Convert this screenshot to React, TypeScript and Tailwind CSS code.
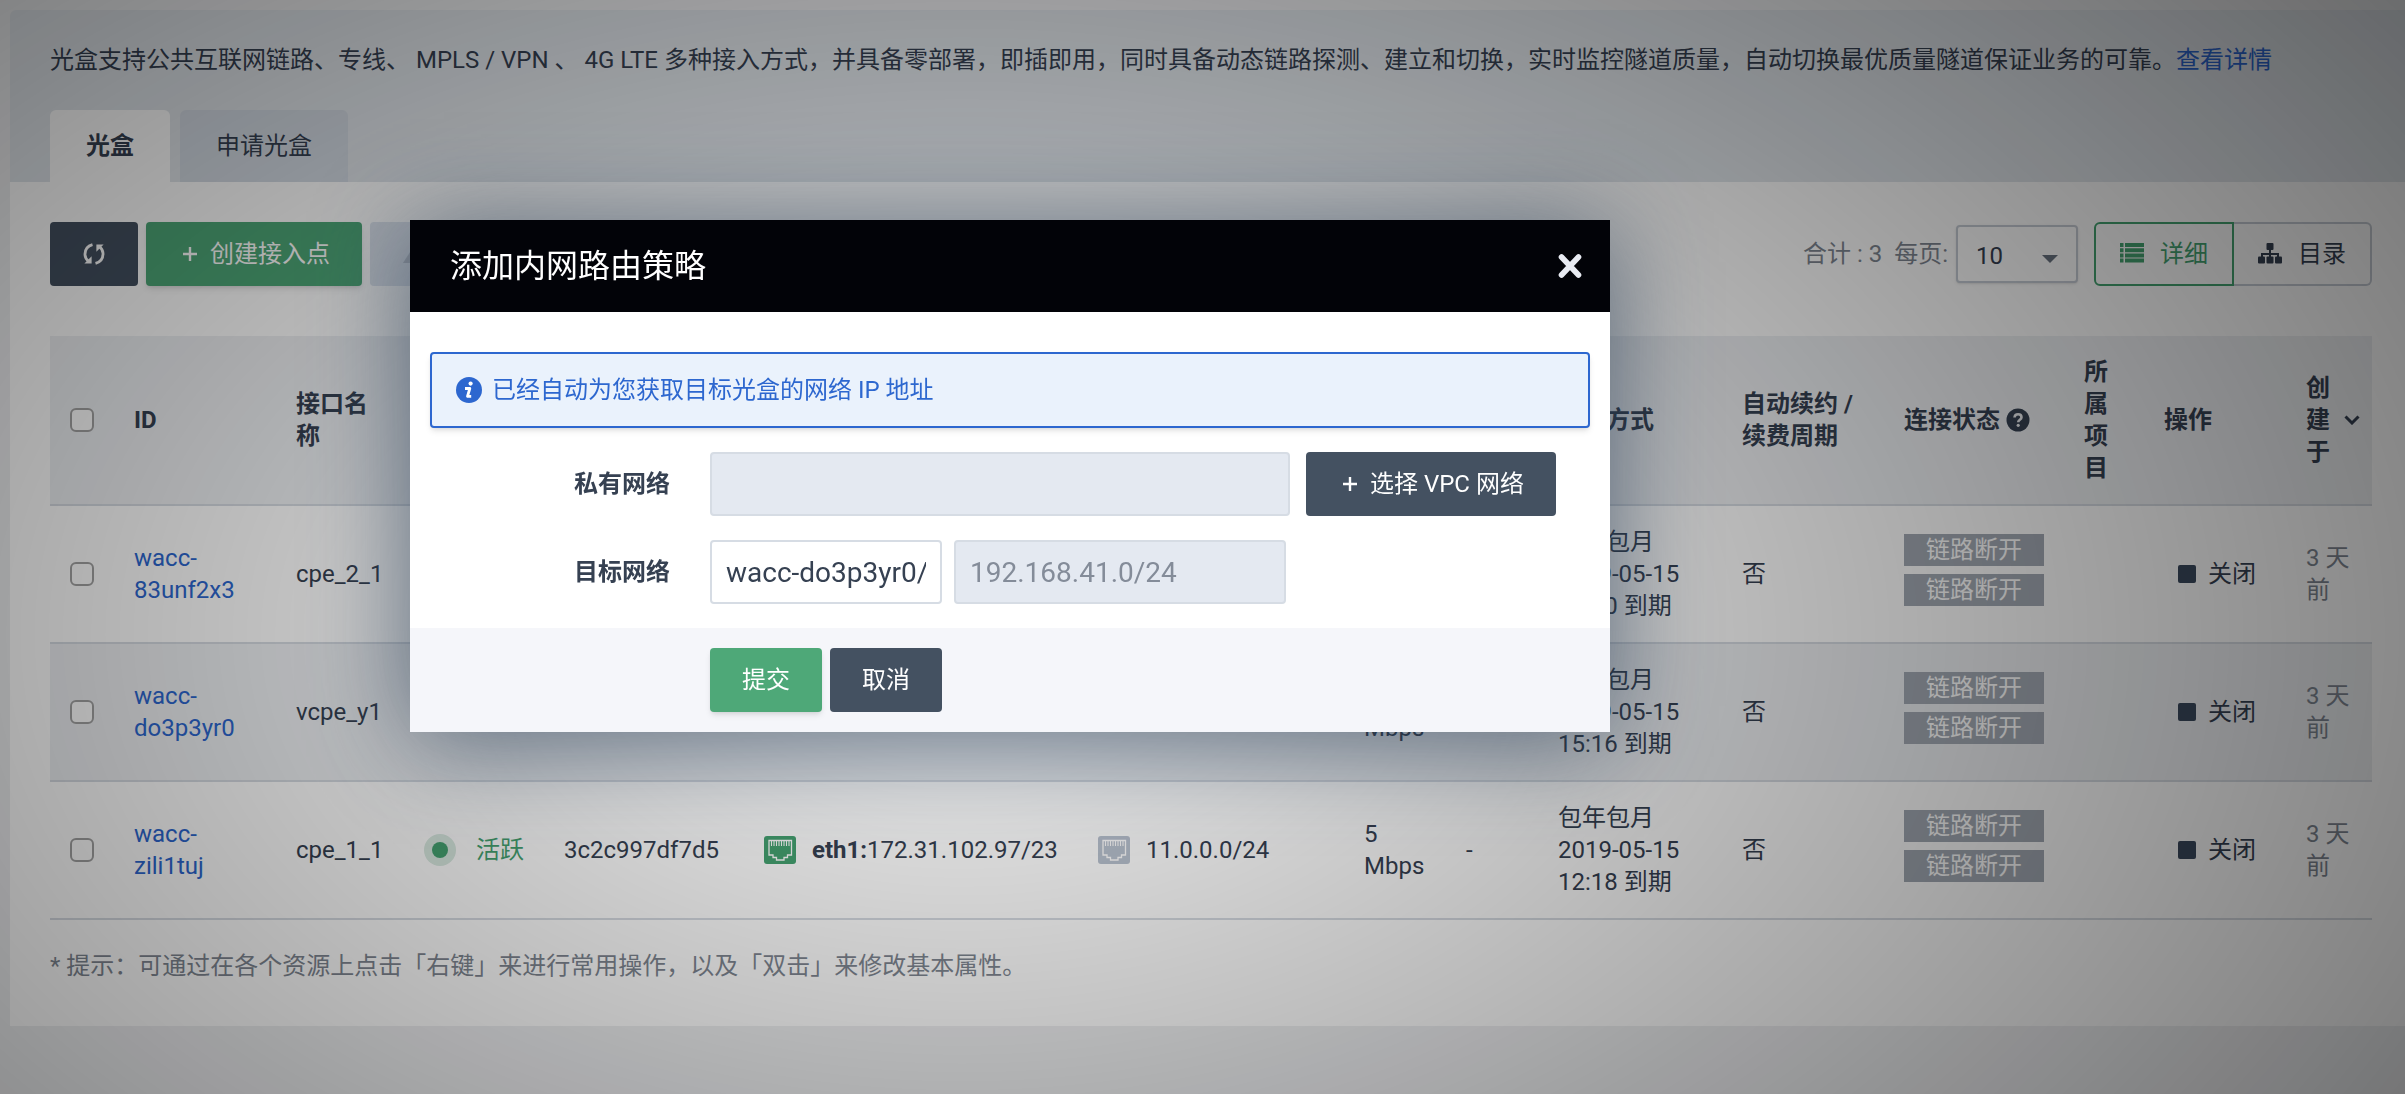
import { useState } from 'react';
import type { ReactNode } from 'react';

interface AccessPoint {
  id: string[];
  name: string;
  mac: string;
  wan: string;
  lan: string;
  expires: string;
}

const accessPoints: AccessPoint[] = [
  { id: ['wacc-', '83unf2x3'], name: 'cpe_2_1', mac: '3c2c997df7a1', wan: '172.31.102.95/23', lan: '12.0.0.0/24', expires: '15:20' },
  { id: ['wacc-', 'do3p3yr0'], name: 'vcpe_y1', mac: '3c2c997df7b3', wan: '172.31.102.96/23', lan: '192.168.41.0/24', expires: '15:16' },
  { id: ['wacc-', 'zili1tuj'], name: 'cpe_1_1', mac: '3c2c997df7d5', wan: '172.31.102.97/23', lan: '11.0.0.0/24', expires: '12:18' }
];

function PlusIcon() {
  return (
    <svg className="w-6 h-6" viewBox="0 0 24 24" fill="none" stroke="currentColor" strokeWidth="2.4" aria-hidden="true">
      <path d="M12 5v14M5 12h14" />
    </svg>
  );
}

function RefreshIcon() {
  return (
    <svg className="w-6 h-6" viewBox="0 0 24 24" fill="none" stroke="currentColor" strokeWidth="2.8" aria-hidden="true">
      <path d="M10.500 2.600C5.500 4 2.800 8 3 12.800c.2 2.600 1.500 5 3.700 6.600" />
      <path d="M13.500 21.400c5-1.400 7.700-5.400 7.500-10.200-.2-2.600-1.500-5-3.700-6.600" />
      <path d="M2.400 21.400h7.200v-7.200z" fill="currentColor" stroke="none" />
      <path d="M21.600 2.600h-7.200v7.200z" fill="currentColor" stroke="none" />
    </svg>
  );
}

function ListIcon() {
  return (
    <svg className="w-6 h-6" viewBox="0 0 24 24" fill="currentColor" aria-hidden="true">
      <path d="M0 1h3.500v4H0zM5 1h19v4H5zM0 6.200h3.500v4H0zM5 6.200h19v4H5zM0 11.400h3.500v4H0zM5 11.400h19v4H5zM0 16.600h3.500v4H0zM5 16.600h19v4H5z" />
    </svg>
  );
}

function TreeIcon() {
  return (
    <svg className="w-6 h-6" viewBox="0 0 24 24" fill="currentColor" aria-hidden="true">
      <rect x="8.500" y="1" width="7" height="7" rx="1" />
      <path d="M11 8h2v3h8v4h-2v-2h-6v2h-2v-2H5v2H3v-4h8z" />
      <rect x="0" y="14.500" width="7" height="7" rx="1" />
      <rect x="8.500" y="14.500" width="7" height="7" rx="1" />
      <rect x="17" y="14.500" width="7" height="7" rx="1" />
    </svg>
  );
}

function PortIcon({ active }: { active?: boolean }) {
  return (
    <svg className="w-8 h-7 shrink-0" viewBox="0 0 32 28" fill="none" aria-hidden="true">
      <rect width="32" height="28" rx="3" fill={active ? '#45a371' : '#b9c2cf'} />
      <path
        d="M5 4.500h22.500v14.500h-4v2.500h-3.500v2.500h-7.500v-2.500H9v-2.500H5z"
        stroke="#fff"
        strokeWidth="1.300"
      />
      <path d="M7.500 5v5M10 5v5M12.500 5v5M15 5v5M17.500 5v5M20 5v5M22.500 5v5M25 5v5" stroke="#fff" strokeWidth="1.100" />
    </svg>
  );
}

function HelpIcon() {
  return (
    <svg className="w-6 h-6" viewBox="0 0 24 24" fill="none" aria-hidden="true">
      <circle cx="12" cy="12" r="11.500" fill="currentColor" />
      <path d="M8.500 9.500c.2-2.200 1.600-3.300 3.600-3.300s3.400 1.200 3.400 3c0 2.600-3.300 2.500-3.300 5" stroke="#eef0f3" strokeWidth="2.600" />
      <circle cx="12.200" cy="17.300" r="1.600" fill="#eef0f3" />
    </svg>
  );
}

function InfoIcon() {
  return (
    <svg className="w-[26px] h-[26px] shrink-0" viewBox="0 0 26 26" fill="none" aria-hidden="true">
      <circle cx="13" cy="13" r="13" fill="#2d67cf" />
      <circle cx="14.600" cy="6.600" r="2.100" fill="#fff" />
      <path d="M9 11.500h4.800l-2.300 7.800h3.700" stroke="#fff" strokeWidth="2.800" strokeLinejoin="round" />
    </svg>
  );
}

function CloseIcon() {
  return (
    <svg className="w-6 h-6" viewBox="0 0 24 24" fill="none" stroke="currentColor" strokeWidth="5.600" strokeLinecap="round" aria-hidden="true">
      <path d="M3.500 3l17 18M20.500 3l-17 18" />
    </svg>
  );
}

const checkboxClass = 'block w-6 h-6 appearance-none rounded-md border-2 border-[#a3a3a3] bg-white';

function Cell({ children }: { children?: ReactNode }) {
  return <td className="px-5 py-5 align-middle">{children}</td>;
}

function HeadCell({ children }: { children?: ReactNode }) {
  return (
    <th scope="col" className="px-5 py-5 align-middle text-left font-bold">
      {children}
    </th>
  );
}

function Row({ point }: { point: AccessPoint }) {
  return (
    <tr className="border-b-2 border-[#d6dbe2] even:bg-[#eef0f3]">
      <Cell>
        <input type="checkbox" aria-label={point.name} className={checkboxClass} />
      </Cell>
      <Cell>
        <a href="#detail" className="text-[#2d67cf]">
          {point.id[0]}
          <br />
          {point.id[1]}
        </a>
      </Cell>
      <Cell>{point.name}</Cell>
      <Cell>
        <div className="flex items-center gap-5 whitespace-nowrap text-[#45a371]">
          <span className="flex w-8 h-8 shrink-0 items-center justify-center rounded-full bg-[#d9eae1]">
            <span className="w-4 h-4 rounded-full bg-[#45a371]" />
          </span>
          活跃
        </div>
      </Cell>
      <Cell>{point.mac}</Cell>
      <Cell>
        <div className="flex items-center gap-4 whitespace-nowrap">
          <PortIcon active />
          <span>
            <b>eth1:</b>
            {point.wan}
          </span>
        </div>
      </Cell>
      <Cell>
        <div className="flex items-center gap-4 whitespace-nowrap">
          <PortIcon />
          {point.lan}
        </div>
      </Cell>
      <Cell>
        5<br />
        Mbps
      </Cell>
      <Cell>-</Cell>
      <Cell>
        <div className="whitespace-nowrap">
          包年包月
          <br />
          2019-05-15
          <br />
          {point.expires} 到期
        </div>
      </Cell>
      <Cell>否</Cell>
      <Cell>
        <div className="w-[140px] text-center text-white">
          <div className="mb-2 bg-[#a3aab4]">链路断开</div>
          <div className="mb-2 bg-[#a3aab4]">链路断开</div>
        </div>
      </Cell>
      <Cell />
      <Cell>
        <button type="button" className="flex items-center gap-3 pl-3.5 whitespace-nowrap">
          <span className="w-[18px] h-[18px] rounded-xs bg-[#3b4a5e]" />
          关闭
        </button>
      </Cell>
      <Cell>
        <div className="whitespace-nowrap text-[#7f8792]">
          3 天
          <br />前
        </div>
      </Cell>
    </tr>
  );
}

function RouteDialog() {
  const [target, setTarget] = useState('wacc-do3p3yr0/');

  return (
    <div
      role="dialog"
      aria-labelledby="dialog-title"
      className="w-[1200px] bg-white shadow-[0_8px_96px_rgba(38,60,85,0.68)]"
    >
      <div className="flex h-[92px] items-center justify-between bg-[#020308] pl-10 pr-7">
        <h2 id="dialog-title" className="text-[32px] leading-10 text-white">添加内网路由策略</h2>
        <button type="button" aria-label="关闭" className="text-[#e8ebf2]">
          <CloseIcon />
        </button>
      </div>

      <form onSubmit={(e) => e.preventDefault()}>
        <div className="flex flex-col gap-6 px-5 pt-10 pb-6">
          <div className="flex h-[76px] items-center gap-2.5 rounded-sm border-2 border-[#2d67cf] bg-[#eaf2fc] px-6 text-[#2d67cf] shadow-md">
            <InfoIcon />
            已经自动为您获取目标光盒的网络 IP 地址
          </div>

          <div className="flex items-center">
            <label htmlFor="vpc" className="w-[240px] text-right font-bold">私有网络</label>
            <input
              id="vpc"
              disabled
              className="ml-10 h-16 w-[580px] rounded-sm border-2 border-[#d6dce4] bg-[#e4e9f1] px-3.5 text-[28px]"
            />
            <button type="button" className="ml-4 flex h-16 items-center gap-2 rounded-sm bg-[#445161] px-8 text-white">
              <PlusIcon />
              选择 VPC 网络
            </button>
          </div>

          <div className="flex items-center">
            <label htmlFor="target" className="w-[240px] text-right font-bold">目标网络</label>
            <input
              id="target"
              value={target}
              onChange={(e) => setTarget(e.target.value)}
              className="ml-10 h-16 w-[232px] rounded-sm border-2 border-[#d6dce4] bg-white px-3.5 text-[28px]"
            />
            <input
              aria-label="网段"
              disabled
              value="192.168.41.0/24"
              className="ml-3 h-16 w-[332px] rounded-sm border-2 border-[#d6dce4] bg-[#e4e9f1] px-3.5 text-[28px] text-[#848c99]"
            />
          </div>
        </div>

        <div className="flex gap-2 bg-[#f5f6fa] py-5 pl-[300px] text-white">
          <button type="submit" className="h-16 rounded-sm bg-[#4ea878] px-8 shadow-md">提交</button>
          <button type="button" className="h-16 rounded-sm bg-[#445161] px-8">取消</button>
        </div>
      </form>
    </div>
  );
}

export default function App() {
  const [pageSize, setPageSize] = useState('10');

  return (
    <div lang="zh-CN" className="min-h-screen bg-[#eeeff1] pt-2.5 pl-2.5 font-[Roboto,'Noto_Sans_CJK_SC',sans-serif] text-[24px] leading-8 text-[#364152]">
      <header className="rounded-tl-md bg-[#e1e6eb] pt-[34px] pl-10 pr-[33px]">
        <p>
          光盒支持公共互联网链路、专线、 MPLS / VPN 、 4G LTE 多种接入方式，并具备零部署，即插即用，同时具备动态链路探测、建立和切换，实时监控隧道质量，自动切换最优质量隧道保证业务的可靠。
          <a href="#more" className="text-[#2d67cf]">查看详情</a>
        </p>
        <nav className="mt-[34px] flex gap-2.5">
          <button type="button" className="h-[72px] rounded-t-md bg-white px-9 font-bold">光盒</button>
          <button type="button" className="h-[72px] rounded-t-md bg-[#d4dbe4] px-9">申请光盒</button>
        </nav>
      </header>

      <main className="bg-white pt-10 pl-10 pr-[33px] pb-11">
        <div className="flex items-center justify-between">
          <div className="flex gap-2 text-white">
            <button type="button" aria-label="刷新" className="h-16 rounded-sm bg-[#445161] px-8">
              <RefreshIcon />
            </button>
            <button type="button" className="flex h-16 items-center gap-2 rounded-sm bg-[#4ea878] px-8 shadow-md">
              <PlusIcon />
              创建接入点
            </button>
            <button type="button" disabled aria-label="修改" className="h-16 w-[144px] rounded-sm bg-[#dfe5ee] px-8 text-[#bcc3ce]">
              <svg className="w-6 h-6" viewBox="0 0 24 24" fill="currentColor" aria-hidden="true">
                <path d="M12 4l11 17H1z" />
              </svg>
            </button>
          </div>

          <div className="flex items-center">
            <label htmlFor="page-size" className="whitespace-pre text-[#7f8792]">合计 : 3  每页:</label>
            <div className="relative ml-2">
              <select
                id="page-size"
                value={pageSize}
                onChange={(e) => setPageSize(e.target.value)}
                className="block h-[58px] w-[122px] appearance-none rounded-sm border-2 border-[#c6ccd5] bg-white pt-1 pl-[18px] shadow-sm"
              >
                <option>10</option>
                <option>20</option>
                <option>50</option>
              </select>
              <svg className="pointer-events-none absolute right-5 top-[30px] h-2 w-4" viewBox="0 0 16 8" fill="#6b7481" aria-hidden="true">
                <path d="M0 0h16L8 8z" />
              </svg>
            </div>
            <div className="ml-4 flex">
              <button type="button" className="flex h-16 items-center gap-4 rounded-l-md border-2 border-[#45a371] px-6 text-[#45a371]">
                <ListIcon />
                详细
              </button>
              <button type="button" className="flex h-16 items-center gap-4 rounded-r-md border-2 border-l-0 border-[#c6ccd5] px-6">
                <TreeIcon />
                目录
              </button>
            </div>
          </div>
        </div>

        <table className="mt-[50px] w-full table-fixed border-collapse">
          <colgroup>
            <col className="w-[64px]" />
            <col className="w-[162px]" />
            <col className="w-[128px]" />
            <col className="w-[140px]" />
            <col className="w-[200px]" />
            <col className="w-[334px]" />
            <col className="w-[266px]" />
            <col className="w-[102px]" />
            <col className="w-[92px]" />
            <col className="w-[184px]" />
            <col className="w-[162px]" />
            <col className="w-[180px]" />
            <col className="w-[80px]" />
            <col className="w-[142px]" />
            <col className="w-[86px]" />
          </colgroup>
          <thead>
            <tr className="border-b-2 border-[#d6dbe2] bg-[#eef0f3]">
              <HeadCell>
                <input type="checkbox" aria-label="全选" className={checkboxClass} />
              </HeadCell>
              <HeadCell>ID</HeadCell>
              <HeadCell>接口名称</HeadCell>
              <HeadCell>状态</HeadCell>
              <HeadCell>序列号</HeadCell>
              <HeadCell>外网接口</HeadCell>
              <HeadCell>内网网络</HeadCell>
              <HeadCell>带宽</HeadCell>
              <HeadCell>位置</HeadCell>
              <HeadCell>
                <span className="whitespace-nowrap">计费方式</span>
              </HeadCell>
              <HeadCell>
                <span className="whitespace-nowrap">
                  自动续约 /<br />
                  续费周期
                </span>
              </HeadCell>
              <HeadCell>
                <div className="flex items-center gap-1.5 whitespace-nowrap">
                  连接状态
                  <HelpIcon />
                </div>
              </HeadCell>
              <HeadCell>
                <div className="w-6">所属项目</div>
              </HeadCell>
              <HeadCell>操作</HeadCell>
              <HeadCell>
                <div className="flex items-center gap-3.5">
                  <span className="w-6 shrink-0">创建于</span>
                  <svg className="w-4 h-2.5 shrink-0" viewBox="0 0 16 10" fill="none" stroke="currentColor" strokeWidth="3" aria-hidden="true">
                    <path d="M1.500 1.500L8 8l6.500-6.500" />
                  </svg>
                </div>
              </HeadCell>
            </tr>
          </thead>
          <tbody>
            {accessPoints.map((point) => (
              <Row key={point.name} point={point} />
            ))}
          </tbody>
        </table>

        <p className="mt-[30px] text-[#7f8792]">* 提示：可通过在各个资源上点击「右键」来进行常用操作，以及「双击」来修改基本属性。</p>
      </main>

      {/* Backdrop with vignette */}
      <div className="fixed inset-0 bg-[radial-gradient(83%_114%_at_40%_58%,rgba(0,0,0,0.06),rgba(0,0,0,0.61))] pt-[220px] pl-[410px]">
        <RouteDialog />
      </div>
    </div>
  );
}
